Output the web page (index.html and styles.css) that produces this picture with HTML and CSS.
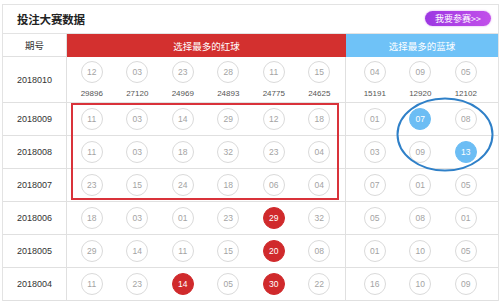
FILE: index.html
```html
<!DOCTYPE html>
<html lang="zh">
<head>
<meta charset="utf-8">
<link rel="stylesheet" href="styles.css">
</head>
<body>
<div class="panel">
  <div class="titlebar">
    <span class="title">投注大赛数据</span>
    <span class="join">我要参赛&gt;&gt;</span>
  </div>
  <div class="table">
    <div class="hcell period">期号</div>
    <div class="hcell red-h">选择最多的红球</div>
    <div class="hcell blue-h">选择最多的蓝球</div>

    <div class="pcell tall">2018010</div>
    <div class="rcell tall">
      <div class="bc"><span class="ball">12</span><span class="cnt">29896</span></div>
      <div class="bc"><span class="ball">03</span><span class="cnt">27120</span></div>
      <div class="bc"><span class="ball">23</span><span class="cnt">24969</span></div>
      <div class="bc"><span class="ball">28</span><span class="cnt">24893</span></div>
      <div class="bc"><span class="ball">11</span><span class="cnt">24775</span></div>
      <div class="bc"><span class="ball">15</span><span class="cnt">24625</span></div>
    </div>
    <div class="bcell tall">
      <div class="bc"><span class="ball">04</span><span class="cnt">15191</span></div>
      <div class="bc"><span class="ball">09</span><span class="cnt">12920</span></div>
      <div class="bc"><span class="ball">05</span><span class="cnt">12102</span></div>
    </div>

    <div class="pcell">2018009</div>
    <div class="rcell"><span class="ball">11</span><span class="ball">03</span><span class="ball">14</span><span class="ball">29</span><span class="ball">12</span><span class="ball">18</span></div>
    <div class="bcell"><span class="ball">01</span><span class="ball on-b">07</span><span class="ball">08</span></div>

    <div class="pcell">2018008</div>
    <div class="rcell"><span class="ball">11</span><span class="ball">03</span><span class="ball">18</span><span class="ball">32</span><span class="ball">23</span><span class="ball">04</span></div>
    <div class="bcell"><span class="ball">03</span><span class="ball">09</span><span class="ball on-b">13</span></div>

    <div class="pcell">2018007</div>
    <div class="rcell"><span class="ball">23</span><span class="ball">15</span><span class="ball">24</span><span class="ball">18</span><span class="ball">06</span><span class="ball">04</span></div>
    <div class="bcell"><span class="ball">07</span><span class="ball">01</span><span class="ball">05</span></div>

    <div class="pcell">2018006</div>
    <div class="rcell"><span class="ball">18</span><span class="ball">03</span><span class="ball">01</span><span class="ball">23</span><span class="ball on-r">29</span><span class="ball">32</span></div>
    <div class="bcell"><span class="ball">05</span><span class="ball">08</span><span class="ball">01</span></div>

    <div class="pcell">2018005</div>
    <div class="rcell"><span class="ball">29</span><span class="ball">14</span><span class="ball">11</span><span class="ball">15</span><span class="ball on-r">20</span><span class="ball">08</span></div>
    <div class="bcell"><span class="ball">01</span><span class="ball">10</span><span class="ball">05</span></div>

    <div class="pcell">2018004</div>
    <div class="rcell"><span class="ball">11</span><span class="ball">23</span><span class="ball on-r">14</span><span class="ball">05</span><span class="ball on-r">30</span><span class="ball">22</span></div>
    <div class="bcell"><span class="ball">16</span><span class="ball">10</span><span class="ball">09</span></div>
  </div>
  <svg class="marks" width="500" height="301" viewBox="0 0 500 301">
    <rect x="72" y="104" width="266" height="95" fill="none" stroke="#d9323a" stroke-width="2"/>
    <ellipse cx="445" cy="134.5" rx="47.5" ry="36" fill="none" stroke="#2f80c8" stroke-width="2"/>
  </svg>
</div>
</body>
</html>
```

FILE: styles.css
```css
html, body {
  margin: 0;
  padding: 0;
  background: #ffffff;
}
body {
  font-family: "Noto Sans CJK SC", "Liberation Sans", sans-serif;
  width: 500px;
  height: 301px;
  overflow: hidden;
}
.panel {
  position: relative;
  margin: 4px 0 0 2px;
  width: 495px;
  border: 1px solid #e3e3e3;
  border-bottom: none;
}
.titlebar {
  height: 28px;
  border-bottom: 1px solid #e3e3e3;
  display: flex;
  align-items: center;
  justify-content: space-between;
  padding: 0 7px 0 14px;
}
.title {
  font-size: 11.5px;
  font-weight: 700;
  color: #222;
  letter-spacing: -0.2px;
}
.join {
  width: 66px;
  height: 15px;
  border-radius: 8px;
  background: linear-gradient(to right, #9c37e2, #c250ea);
  color: #fff;
  font-size: 9px;
  line-height: 15px;
  text-align: center;
  box-shadow: 0 0 2px rgba(190, 80, 230, 0.6);
  margin-top: -1px;
}
.table {
  display: grid;
  grid-template-columns: 64px 279px 152px;
  grid-template-rows: 23px 46px repeat(6, 33px);
}
.hcell {
  display: flex;
  align-items: center;
  justify-content: center;
  font-size: 9.5px;
}
.period {
  color: #333;
  border-right: 1px solid #e0e0e0;
  border-bottom: 1px solid #e0e0e0;
}
.red-h {
  background: #d3302f;
  color: #fff;
}
.blue-h {
  background: #6fc2f7;
  color: #fff;
}
.pcell {
  display: flex;
  align-items: center;
  justify-content: center;
  font-family: "Liberation Sans", sans-serif;
  font-size: 9px;
  color: #333;
  border-right: 1px solid #e0e0e0;
  border-bottom: 1px solid #e0e0e0;
}
.rcell, .bcell {
  display: grid;
  align-items: center;
  justify-items: center;
  border-bottom: 1px solid #e0e0e0;
}
.rcell {
  grid-template-columns: repeat(6, 45.5px);
  padding-left: 2px;
  border-right: 1px solid #e0e0e0;
}
.bcell {
  grid-template-columns: repeat(3, 45.5px);
  padding-left: 6px;
}
.bc {
  display: flex;
  flex-direction: column;
  align-items: center;
  gap: 6px;
}
.ball {
  width: 20px;
  height: 20px;
  border: 1px solid #dadada;
  border-radius: 50%;
  display: flex;
  align-items: center;
  justify-content: center;
  font-family: "Liberation Sans", sans-serif;
  font-size: 8.5px;
  color: #a3a3a3;
  background: #fff;
}
.on-r {
  background: #d02a2c;
  border-color: #d02a2c;
  color: #fff;
}
.on-b {
  background: #6cbdf4;
  border-color: #6cbdf4;
  color: #fff;
}
.cnt {
  font-family: "Liberation Sans", sans-serif;
  font-size: 8px;
  color: #555;
  line-height: 10px;
}
.marks {
  position: absolute;
  left: -3px;
  top: -5px;
  pointer-events: none;
}
```
